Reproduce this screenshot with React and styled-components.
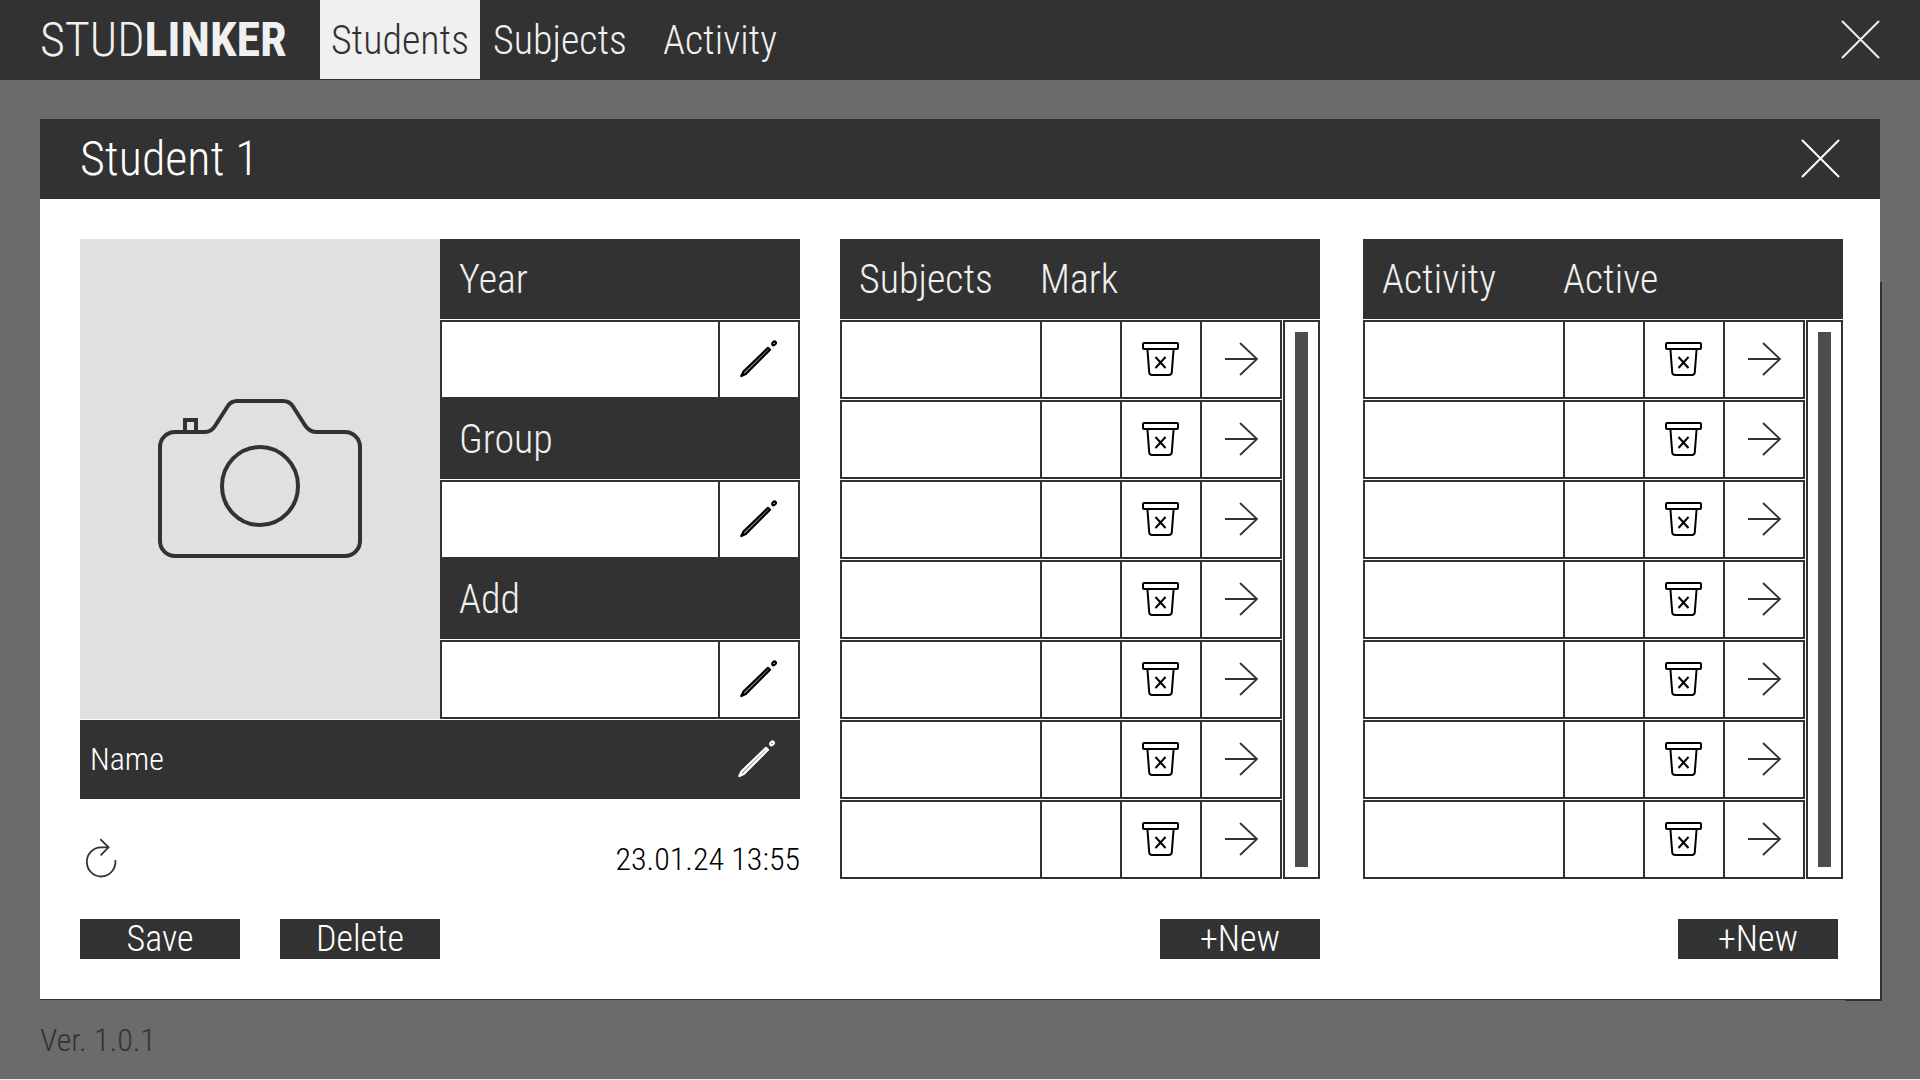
import React from "react";
import styled, { createGlobalStyle } from "styled-components";

const ink = "#323232";
const paper = "#f0f0f0";

const GlobalStyle = createGlobalStyle`
  *, *::before, *::after { box-sizing: border-box; }
  body { margin: 0; background: #6b6b6b; }
  body, button, input { font-family: "Roboto Condensed", Roboto, sans-serif; font-weight: 300; }
  button { border: 0; padding: 0; background: none; cursor: pointer; }
  svg { display: block; overflow: visible; }
`;

const Page = styled.div`
  min-height: 100vh;
  display: flex;
  flex-direction: column;
  border-bottom: 1px solid ${paper};
`;

const TopBar = styled.header`
  display: grid;
  grid-template-columns: 320px 1fr auto;
  height: 80px;
  padding-right: 20px;
  background: ${ink};
  color: ${paper};
`;

const Logo = styled.div`
  padding-left: 40px;
  font-size: 48px;
  line-height: 80px;
  white-space: nowrap;
  strong { font-weight: 700; }
`;

const Tabs = styled.nav`
  display: flex;
`;

const Tab = styled.a`
  width: 160px;
  height: 79px;
  font-size: 40px;
  line-height: 82px;
  text-align: center;
  text-decoration: none;
  color: ${(p) => (p.$active ? ink : paper)};
  background: ${(p) => (p.$active ? paper : "transparent")};
`;

const IconButton = styled.button`
  display: flex;
  flex-shrink: 0;
  align-items: center;
  justify-content: center;
  width: ${(p) => p.$width || "80px"};
  color: ${(p) => p.$color || "#000"};
`;

const Panel = styled.main`
  position: relative;
  margin: 39px 40px 0;
  background: #fff;
  border-bottom: 1px solid ${ink};
  &::before, &::after { content: ""; position: absolute; background: ${ink}; }
  &::before { top: 163px; bottom: -2px; right: -2px; width: 2px; }
  &::after { bottom: -2px; right: 0; width: 35px; height: 2px; }
`;

const PanelHeader = styled.header`
  display: flex;
  justify-content: space-between;
  height: 80px;
  padding: 0 20px 0 40px;
  background: ${ink};
  color: #fff;
`;

const Title = styled.h1`
  margin: 0;
  font-size: 48px;
  font-weight: 300;
  line-height: 80px;
`;

const Columns = styled.div`
  display: grid;
  grid-template-columns: minmax(0, 720fr) minmax(0, 480fr) minmax(0, 483fr);
  gap: 40px;
  padding: 40px 37px 40px 40px;
`;

const Column = styled.section`
  display: flex;
  flex-direction: column;
  gap: 40px;
  padding-left: ${(p) => p.$inset || "0"};
`;

const Profile = styled.div`
  display: grid;
  grid-template-columns: repeat(2, minmax(0, 1fr));
`;

const Photo = styled.button`
  display: flex;
  align-items: center;
  justify-content: center;
  background: #e0e0e0;
`;

const Label = styled.label`
  display: block;
  height: 80px;
  padding-left: 19px;
  font-size: 40px;
  line-height: 82px;
  background: ${ink};
  color: ${paper};
`;

const Field = styled.div`
  display: flex;
  height: 79px;
  margin-top: 1px;
  border: 2px solid ${ink};
  & + ${Label} { margin-top: -1px; height: 81px; line-height: 84px; }
`;

const TextInput = styled.input`
  flex: 1;
  min-width: 0;
  padding: 0 16px;
  border: 0;
  border-right: 2px solid ${ink};
  background: #fff;
  font-size: 32px;
  outline-offset: -2px;
`;

const NameBar = styled.div`
  grid-column: 1 / -1;
  display: flex;
  height: 79px;
  margin-top: 1px;
  padding-right: 4px;
  background: ${ink};
`;

const NameInput = styled.input`
  flex: 1;
  min-width: 0;
  padding: 0 10px 2px;
  border: 0;
  background: transparent;
  color: #fff;
  font-size: 32px;
`;

const Status = styled.div`
  display: flex;
  justify-content: space-between;
  height: 40px;
  font-size: 32px;
  line-height: 40px;
  color: #000;
`;

const Actions = styled.div`
  display: flex;
  gap: 40px;
  justify-content: ${(p) => (p.$end ? "flex-end" : "flex-start")};
  padding-right: ${(p) => p.$inset || "0"};
`;

const Action = styled.button`
  width: 160px;
  height: 40px;
  background: ${ink};
  color: #fff;
  font-size: 36px;
  line-height: 40px;
`;

const ListBox = styled.div`
  display: grid;
  grid-template-columns: 1fr 38px;
  height: 640px;
`;

const Table = styled.table`
  display: block;
  thead, tbody { display: block; }
`;

const HeadRow = styled.tr`
  display: grid;
  grid-template-columns: 1fr 242px;
  height: 80px;
  background: ${ink};
`;

const HeadCell = styled.th`
  padding: 0 0 0 ${(p) => p.$pad || "0"};
  font-size: 40px;
  font-weight: 300;
  line-height: 82px;
  text-align: left;
  color: ${paper};
`;

const Row = styled.tr`
  display: grid;
  grid-template-columns: 1fr 80px 80px 80px;
  height: 79px;
  margin-top: 1px;
  border: solid ${ink};
  border-width: 2px 0 2px 2px;
`;

const Cell = styled.td`
  display: flex;
  padding: 0;
  border-right: 2px solid ${ink};
`;

const ScrollSide = styled.div`
  display: flex;
  flex-direction: column;
  &::before { content: ""; height: 80px; background: ${ink}; }
`;

const Track = styled.div`
  flex: 1;
  margin: 1px 0 0 1px;
  padding: 10px;
  border: 2px solid ${ink};
`;

const Thumb = styled.div`
  height: 100%;
  background: #4d4d4d;
`;

const Footer = styled.footer`
  height: 79px;
  padding-left: 40px;
  font-size: 32px;
  line-height: 80px;
  color: ${ink};
`;

const CloseIcon = () => (
  <svg width="36" height="38" viewBox="0 0 36 38" fill="none" stroke="currentColor" strokeWidth="2" strokeLinecap="round">
    <path d="M0.500 0.500L36.500 36.500M36.500 0.500L0.500 36.500" />
  </svg>
);

const PencilIcon = () => (
  <svg width="40" height="39" viewBox="0 0 40 39" fill="none" stroke="currentColor" strokeWidth="2.2" strokeLinejoin="round">
    <path d="M2.3 36L4.4 31.6L29 7.8L31 9.7L6.8 34Z" fill="#999" />
    <ellipse cx="35" cy="3.4" rx="2.1" ry="1.5" transform="rotate(-42 35 3.4)" />
  </svg>
);

const TrashIcon = () => (
  <svg width="40" height="39" viewBox="0 0 40 39" fill="none" stroke="currentColor" strokeWidth="2" strokeLinejoin="round">
    <rect x="2" y="3" width="35" height="6" rx="1" />
    <path d="M6.4 9L8.2 32.4Q8.5 35 11 35H28Q30.5 35 30.8 32.4L32.6 9" />
    <path d="M14.5 17L24.5 28M24.5 17L14.5 28" />
  </svg>
);

const ArrowIcon = () => (
  <svg width="40" height="39" viewBox="0 0 40 39" fill="none" stroke="currentColor" strokeWidth="1.8">
    <path d="M4 19H36M19 3L36 19L19 35" />
  </svg>
);

const RefreshIcon = () => (
  <svg width="40" height="40" viewBox="0 0 40 40" fill="none" stroke="currentColor" strokeWidth="1.8">
    <path d="M35.300 21A14.300 14.600 0 1 1 21 8.300H28.500" />
    <path d="M20.300 0.200L28.500 8.300L20.600 16.400" />
  </svg>
);

const CameraIcon = () => (
  <svg width="208" height="164" viewBox="96 177 208 164" fill="none" stroke={ink} strokeWidth="4">
    <path d="M115 212H145C149.500 212 152.500 210 155 206L167.500 186.500C170 182.500 173 181 177 181H223C227 181 230.500 182.500 233 186.500L244.500 204.500C247.500 209.500 250.500 212 256 212H285A15 15 0 0 1 300 227V321A15 15 0 0 1 285 336H115A15 15 0 0 1 100 321V227A15 15 0 0 1 115 212Z" />
    <path d="M125 212V200H136V212" />
    <ellipse cx="200" cy="266" rx="38" ry="39" />
  </svg>
);

const fields = ["Year", "Group", "Add"];
const rows = [1, 2, 3, 4, 5, 6, 7];

const List = ({ name, value }) => (
  <ListBox>
    <Table>
      <thead>
        <HeadRow>
          <HeadCell $pad="19px">{name}</HeadCell>
          <HeadCell colSpan={3}>{value}</HeadCell>
        </HeadRow>
      </thead>
      <tbody>
        {rows.map((row) => (
          <Row key={row}>
            <Cell />
            <Cell />
            <Cell>
              <IconButton $width="100%" aria-label={`Remove row ${row}`}>
                <TrashIcon />
              </IconButton>
            </Cell>
            <Cell>
              <IconButton $width="100%" $color={ink} aria-label={`Open row ${row}`}>
                <ArrowIcon />
              </IconButton>
            </Cell>
          </Row>
        ))}
      </tbody>
    </Table>
    <ScrollSide>
      <Track>
        <Thumb />
      </Track>
    </ScrollSide>
  </ListBox>
);

export default function App() {
  return (
    <Page>
      <GlobalStyle />
      <TopBar>
        <Logo>
          STUD<strong>LINKER</strong>
        </Logo>
        <Tabs>
          <Tab href="#students" $active aria-current="page">Students</Tab>
          <Tab href="#subjects">Subjects</Tab>
          <Tab href="#activity">Activity</Tab>
        </Tabs>
        <IconButton $color={paper} aria-label="Close application">
          <CloseIcon />
        </IconButton>
      </TopBar>
      <Panel>
        <PanelHeader>
          <Title>Student 1</Title>
          <IconButton $color="#fff" aria-label="Close student">
            <CloseIcon />
          </IconButton>
        </PanelHeader>
        <Columns>
          <Column>
            <Profile>
              <Photo aria-label="Add photo">
                <CameraIcon />
              </Photo>
              <div>
                {fields.map((field) => (
                  <React.Fragment key={field}>
                    <Label htmlFor={field}>{field}</Label>
                    <Field>
                      <TextInput id={field} type="text" />
                      <IconButton $width="78px" aria-label={`Edit ${field}`}>
                        <PencilIcon />
                      </IconButton>
                    </Field>
                  </React.Fragment>
                ))}
              </div>
              <NameBar>
                <NameInput type="text" aria-label="Name" defaultValue="Name" />
                <IconButton $width="78px" $color="#fff" aria-label="Edit name">
                  <PencilIcon />
                </IconButton>
              </NameBar>
            </Profile>
            <Status>
              <IconButton $width="40px" $color={ink} aria-label="Refresh">
                <RefreshIcon />
              </IconButton>
              <time dateTime="2024-01-23T13:55">23.01.24 13:55</time>
            </Status>
            <Actions>
              <Action>Save</Action>
              <Action>Delete</Action>
            </Actions>
          </Column>
          <Column>
            <List name="Subjects" value="Mark" />
            <Actions $end>
              <Action>+New</Action>
            </Actions>
          </Column>
          <Column $inset="3px">
            <List name="Activity" value="Active" />
            <Actions $end $inset="5px">
              <Action>+New</Action>
            </Actions>
          </Column>
        </Columns>
      </Panel>
      <Footer>Ver. 1.0.1</Footer>
    </Page>
  );
}
